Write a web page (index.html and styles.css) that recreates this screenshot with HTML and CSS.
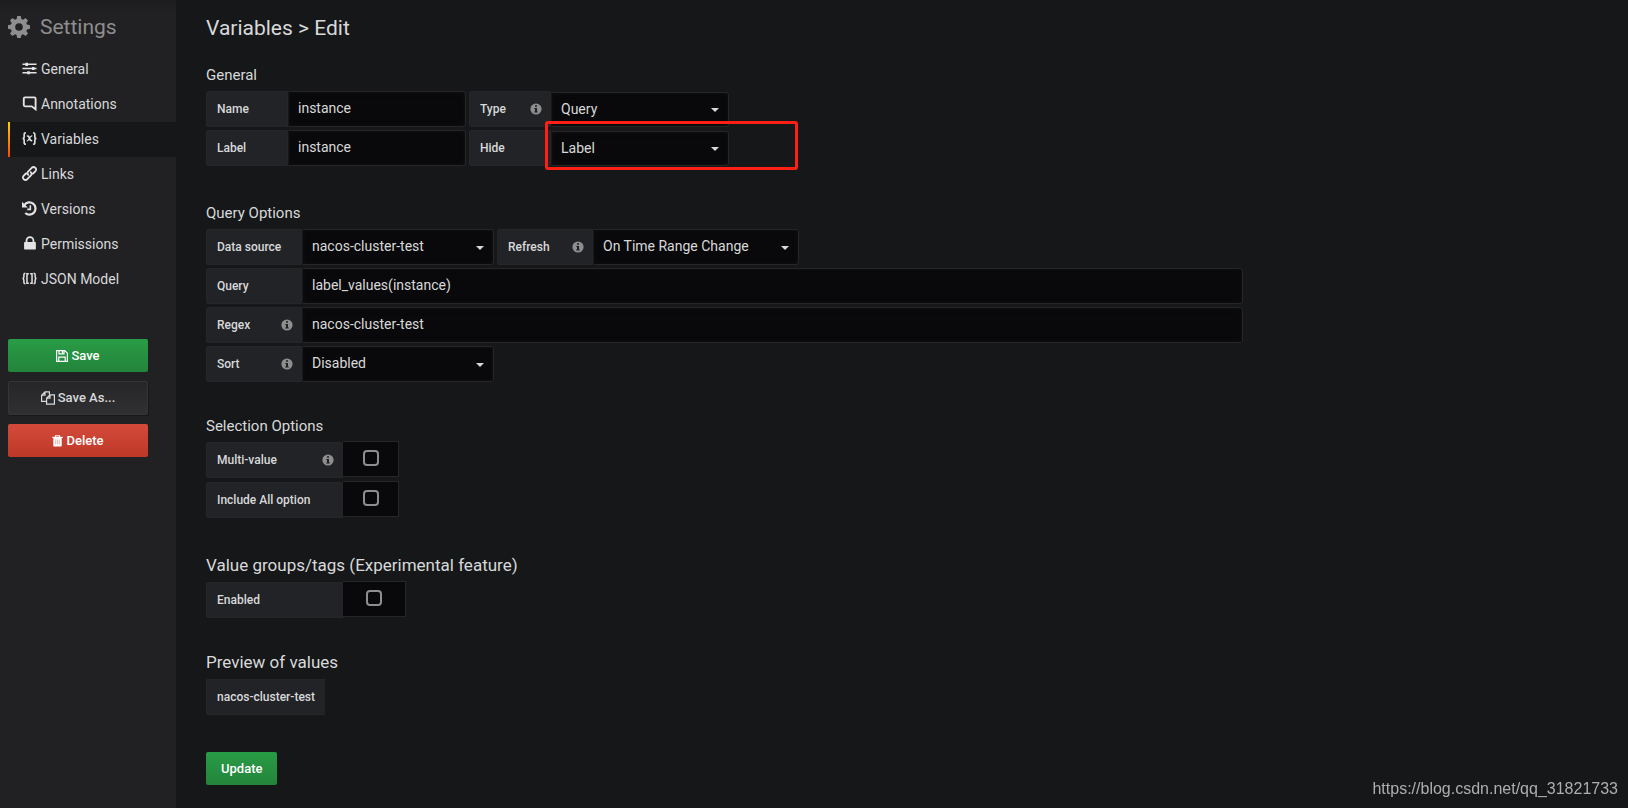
FILE: index.html
```html
<!DOCTYPE html>
<html lang="en">
<head>
<meta charset="utf-8">
<title>Settings - Variables</title>
<link rel="stylesheet" href="styles.css">
</head>
<body>
<svg class="sprite" aria-hidden="true">
  <symbol id="info" viewBox="0 0 12 12">
    <circle cx="6" cy="6" r="5.6" fill="#8e8e8e"/>
    <path d="M5 2.200h2v1.600H5zM4.300 4.900H7v3.500h.8v1H4.200v-1H5V5.900h-.7z" fill="#212124"/>
  </symbol>
</svg>
<div class="page">
  <aside class="sidebar">
    <h2 class="sidebar-title">
      <svg width="22" height="22" viewBox="0 0 22 22" fill="#8e8e8e" fill-rule="evenodd"><path d="M9.200 0h3.600l.6 3 1.600.7L17.600 2 20 4.400 18.300 7l.7 1.600 3 .6v3.600l-3 .6-.7 1.600L20 17.600 17.600 20 15 18.300l-1.600.7-.6 3H9.200l-.6-3L7 18.300 4.400 20 2 17.600 3.700 15 3 13.400l-3-.6V9.200l3-.6L3.700 7 2 4.400 4.400 2 7 3.700 8.600 3zM11 7.200a3.800 3.800 0 1 0 0 7.600 3.800 3.800 0 0 0 0-7.600z"/></svg>
      <span>Settings</span>
    </h2>
    <nav class="nav">
      <a class="nav-item" href="#general">
        <svg class="icon" viewBox="0 0 16 16" stroke="currentColor" fill="none"><path d="M.5 3.500h15M.5 8h15M.5 12.500h15" stroke-width="1.500"/><path d="M5 1.800v3.400M12 6.300v3.400M7 10.800v3.400" stroke-width="2.800"/></svg>General</a>
      <a class="nav-item" href="#annotations">
        <svg class="icon" viewBox="0 0 16 16" fill="none" stroke="currentColor" stroke-width="2"><path d="M3.200 1.500h10q1.300 0 1.300 1.300v11.400L10.400 11H3.200q-1.300 0-1.300-1.300V2.800Q1.900 1.500 3.200 1.500z"/></svg>Annotations</a>
      <a class="nav-item active" href="#variables">
        <svg class="icon" viewBox="0 0 16 16" fill="none" stroke="currentColor" stroke-width="1.700"><path d="M4.200 1.800Q2.300 1.800 2.300 3.800v2.300Q2.300 8 .6 8q1.700 0 1.700 1.900v2.300q0 2 1.900 2M11.800 1.800q1.900 0 1.900 2v2.300q0 1.900 1.700 1.900-1.700 0-1.700 1.900v2.300q0 2-1.900 2"/><path d="M5.200 5.800Q7 4.400 7.800 7.500T10.900 10.300" stroke-width="1.700"/><path d="M11 5.300Q9.600 4.800 8 7.800T5 10.600" stroke-width="1.200"/></svg>Variables</a>
      <a class="nav-item" href="#links">
        <svg class="icon" viewBox="0 0 16 16" fill="none" stroke="currentColor" stroke-width="1.900" stroke-linecap="round"><path d="M6.700 9.500Q4.900 7.500 6.700 5.700l3.700-3.800q1.800-1.600 3.700 0t0 3.800L11.800 8M9.300 6.500q1.800 2 0 3.800l-3.700 3.800q-1.800 1.600-3.700 0t0-3.800L4.200 8"/></svg>Links</a>
      <a class="nav-item" href="#versions">
        <svg class="icon" viewBox="0 0 16 16" fill="none" stroke="currentColor" stroke-width="2.400"><path d="M2.600 4.200A6.500 6.500 0 1 1 3.500 12.800"/><path d="M0 .8v6.200h6.200z" fill="currentColor" stroke="none"/><path d="M8.900 4.500v4.400H5.600" stroke-width="1.700"/></svg>Versions</a>
      <a class="nav-item" href="#permissions">
        <svg class="icon" viewBox="0 0 16 16" fill="currentColor"><path d="M3 6.500h11q.8 0 .8.8v6.400q0 .8-.8.800H3q-.8 0-.8-.8V7.300q0-.8.8-.8z"/><path d="M4.800 7V4.800a3.700 3.700 0 0 1 7.400 0V7" fill="none" stroke="currentColor" stroke-width="1.900"/></svg>Permissions</a>
      <a class="nav-item" href="#json">
        <svg class="icon" viewBox="0 0 16 16" fill="none" stroke="currentColor" stroke-width="1.600"><path d="M3.600 2.400Q2 2.400 2 4v2.200Q2 8 .5 8 2 8 2 9.800V12q0 1.600 1.600 1.600M12.400 2.400Q14 2.400 14 4v2.200Q14 8 15.500 8 14 8 14 9.800V12q0 1.600-1.600 1.600M7.300 3H5.300v10h2M8.700 3h2v10h-2"/></svg>JSON Model</a>
    </nav>
    <div class="actions">
      <button class="btn btn-green" type="button">
        <svg width="12" height="12" viewBox="0 0 12 12" fill="none" stroke="currentColor" stroke-width="1.200"><path d="M.6.6h8.200l2.600 2.600v8.200H.6zM3 .6v3.200h5V.6M2.800 11.400V7.200h6.400v4.200"/><path d="M6.500 1v2.200"/></svg>Save</button>
      <button class="btn btn-dark" type="button">
        <svg width="14" height="14" viewBox="0 0 14 14" fill="none" stroke="currentColor" stroke-width="1.200"><path d="M5.400 10.400H.6V4.200L4 .8h4.400v2.800M4 .8v3.400H.6M5.600 7.200 9 3.800h4.400v9.400H5.600zM9 3.800v3.400H5.600"/></svg>Save As...</button>
      <button class="btn btn-red" type="button">
        <svg width="11" height="12" viewBox="0 0 11 12" fill="none" stroke="currentColor"><path d="M.3 2.400h10.400" stroke-width="1.200"/><path d="M3.500 2V.7h4V2" stroke-width="1.100"/><path d="M1.300 2.800h8.400v7.800q0 .9-.9.900H2.200q-.9 0-.9-.9z" fill="currentColor" stroke="none"/><path d="M3.700 4.500v5M5.500 4.500v5M7.300 4.500v5" stroke="#e59a90" stroke-width=".7"/></svg>Delete</button>
    </div>
  </aside>

  <main class="main">
    <h1 class="title">Variables &gt; Edit</h1>

    <section class="group">
      <h3 class="heading">General</h3>
      <div class="rows">
        <div class="row">
          <div class="field"><label class="label w-sm" for="name">Name</label><input class="input w-name" id="name" type="text" value="instance"></div>
          <div class="field"><label class="label w-sm" for="type">Type<svg class="info"><use href="#info"/></svg></label><div class="select short w-name"><select id="type"><option>Query</option></select></div></div>
        </div>
        <div class="row">
          <div class="field"><label class="label w-sm" for="label">Label</label><input class="input w-name" id="label" type="text" value="instance"></div>
          <div class="field"><label class="label w-sm" for="hide">Hide</label><div class="select short w-name marked"><select id="hide"><option>Label</option></select></div></div>
        </div>
      </div>
    </section>

    <section class="group compact">
      <h3 class="heading">Query Options</h3>
      <div class="rows">
        <div class="row">
          <div class="field"><label class="label w-md" for="source">Data source</label><div class="select w-source"><select id="source"><option>nacos-cluster-test</option></select></div></div>
          <div class="field"><label class="label w-md" for="refresh">Refresh<svg class="info"><use href="#info"/></svg></label><div class="select w-refresh"><select id="refresh"><option>On Time Range Change</option></select></div></div>
        </div>
        <div class="row wide"><label class="label w-md" for="query">Query</label><input class="input grow" id="query" type="text" value="label_values(instance)"></div>
        <div class="row wide"><label class="label w-md" for="regex">Regex<svg class="info"><use href="#info"/></svg></label><input class="input grow" id="regex" type="text" value="nacos-cluster-test"></div>
        <div class="row"><div class="field"><label class="label w-md" for="sort">Sort<svg class="info"><use href="#info"/></svg></label><div class="select w-source"><select id="sort"><option>Disabled</option></select></div></div></div>
      </div>
    </section>

    <section class="group">
      <h3 class="heading">Selection Options</h3>
      <div class="rows loose">
        <div class="field"><label class="label w-lg" for="multi">Multi-value<svg class="info"><use href="#info"/></svg></label><div class="toggle"><input id="multi" type="checkbox"></div></div>
        <div class="field"><label class="label w-lg" for="all">Include All option</label><div class="toggle"><input id="all" type="checkbox"></div></div>
      </div>
    </section>

    <section class="group compact">
      <h3 class="heading big">Value groups/tags (Experimental feature)</h3>
      <div class="field"><label class="label w-lg" for="enabled">Enabled</label><div class="toggle toggle-wide"><input id="enabled" type="checkbox"></div></div>
    </section>

    <section class="group">
      <h3 class="heading big">Preview of values</h3>
      <div class="field"><span class="label value">nacos-cluster-test</span></div>
    </section>

    <button class="btn btn-green update" type="button">Update</button>
  </main>
</div>
<div class="watermark">https://blog.csdn.net/qq_31821733</div>
</body>
</html>
```

FILE: styles.css
```css
*, *::before, *::after { box-sizing: border-box; }

body {
  margin: 0;
  background: #161719;
  color: #d8d9da;
  font: 14px/20px Roboto, sans-serif;
}

.sprite { position: absolute; width: 0; height: 0; }
h1, h2, h3 { margin: 0; font-weight: 400; }

.page { display: flex; min-height: 100vh; }

.sidebar {
  flex: 0 0 176px;
  padding: 12px 0 0 8px;
  background: linear-gradient(#1c1c1f, #212124 12px);
}

.sidebar-title {
  display: flex;
  align-items: center;
  gap: 10px;
  height: 30px;
  color: #8e8e8e;
  font-size: 21px;
  line-height: 30px;
}

.nav { margin-top: 10px; }

.nav-item {
  display: flex;
  align-items: center;
  gap: 4px;
  height: 35px;
  padding: 0 0 2px 14px;
  color: #d8d9da;
  text-decoration: none;
}

.nav-item.active {
  padding-left: 12px;
  border-left: 2px solid;
  border-image: linear-gradient(#ffd500, #ff4400) 1;
  background: #161719;
}

.icon { width: 15px; height: 15px; color: #e3e3e3; }

.actions {
  display: grid;
  gap: 9px;
  width: 140px;
  margin-top: 42px;
}

.btn {
  display: flex;
  align-items: center;
  justify-content: center;
  gap: 3px;
  height: 33px;
  padding: 0 14px;
  border: 0;
  border-radius: 2px;
  color: #fff;
  font: 500 13px/20px Roboto, sans-serif;
}

.btn-green { background: linear-gradient(#299c46, #23843b); }
.btn-red { background: linear-gradient(#d44a3a, #bd3828); }
.btn-dark {
  height: 34px;
  border: 1px solid #353538;
  background: linear-gradient(#262628, #303032);
  color: #d8d9da;
  box-shadow: 1px 1px 0 #161719;
}

.main { flex: 1; min-width: 0; padding: 13px 30px 23px; }

.title { font-size: 21px; line-height: 30px; }
.title + .group { margin-top: 21px; }

.group { margin-bottom: 36px; }
.group.compact { margin-bottom: 33px; }
.heading { padding-bottom: 5px; font-size: 15px; line-height: 22px; }
.heading.big { padding-bottom: 6px; font-size: 17px; }

.rows { display: grid; gap: 3px; }
.rows.loose { gap: 4px; }
.row { display: flex; gap: 3px; }
.row.wide { max-width: 1037px; gap: 0; }
.field { display: flex; }

.label {
  display: flex;
  flex: none;
  align-items: center;
  justify-content: space-between;
  height: 36px;
  padding: 0 8px 0 10px;
  border: 1px solid #262628;
  border-radius: 2px 0 0 2px;
  background: #212327;
  font-size: 12px;
  font-weight: 500;
}

.w-sm { width: 82px; }
.w-md { width: 96px; }
.w-lg { width: 137px; }
.w-name { width: 178px; }
.w-source { width: 192px; }
.w-refresh { width: 206px; }
.grow { flex: 1; min-width: 0; }
.info { width: 12px; height: 12px; }

.input, .select select {
  height: 36px;
  padding: 0 9px 2px;
  border: 1px solid #262628;
  border-left-color: #161719;
  border-radius: 0 3px 3px 0;
  outline: 0;
  background: #09090b;
  box-shadow: inset 0 0 5px #111113;
  color: #d8d9da;
  font: 14px/20px Roboto, sans-serif;
}

.select { position: relative; }
.select select { width: 100%; appearance: none; }
.select::after {
  content: "";
  position: absolute;
  top: 17px;
  right: 10px;
  border: 4px solid transparent;
  border-top-color: #d8d9da;
  border-bottom: 0;
}

.select.short { padding-top: 1px; }
.select.short select { height: 35px; }

.marked::before {
  content: "";
  position: absolute;
  z-index: 1;
  top: -9px;
  left: -6px;
  width: 253px;
  height: 49px;
  border: 3px solid #ff2015;
  border-radius: 3px;
  pointer-events: none;
}

.toggle {
  display: grid;
  place-items: center;
  width: 56px;
  height: 36px;
  margin-top: -1px;
  border: 1px solid #262628;
  border-left: 0;
  background: #09090b;
}

.toggle-wide { width: 63px; }

.toggle input {
  appearance: none;
  width: 16px;
  height: 16px;
  margin: 0 0 2px;
  border: 2px solid #8e8e8e;
  border-radius: 4px;
}

.value { padding: 0 10px; border-right: 0; }
.update { margin-top: 37px; padding: 0 15px; }

.watermark {
  position: fixed;
  right: 10px;
  bottom: 8px;
  color: #aeaeae;
  font: 16px/22px "Liberation Sans", sans-serif;
}
```
